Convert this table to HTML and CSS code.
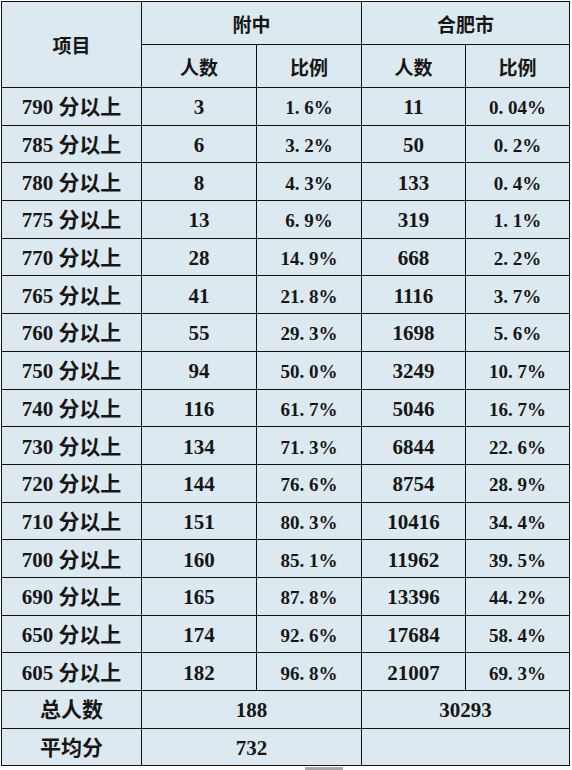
FILE: index.html
```html
<!DOCTYPE html>
<html lang="zh">
<head>
<meta charset="utf-8">
<link rel="stylesheet" href="styles.css">
</head>
<body>
<table class="score-table">
  <colgroup>
    <col class="c1"><col class="c2"><col class="c3"><col class="c4"><col class="c5">
  </colgroup>
  <thead>
    <tr class="hrow">
      <th rowspan="2">项目</th>
      <th colspan="2">附中</th>
      <th colspan="2">合肥市</th>
    </tr>
    <tr class="hrow">
      <th>人数</th><th>比例</th><th>人数</th><th>比例</th>
    </tr>
  </thead>
  <tbody>
    <tr><td class="lbl">790 分以上</td><td>3</td><td class="pct">1. 6%</td><td>11</td><td class="pct">0. 04%</td></tr>
    <tr><td class="lbl">785 分以上</td><td>6</td><td class="pct">3. 2%</td><td>50</td><td class="pct">0. 2%</td></tr>
    <tr><td class="lbl">780 分以上</td><td>8</td><td class="pct">4. 3%</td><td>133</td><td class="pct">0. 4%</td></tr>
    <tr><td class="lbl">775 分以上</td><td>13</td><td class="pct">6. 9%</td><td>319</td><td class="pct">1. 1%</td></tr>
    <tr><td class="lbl">770 分以上</td><td>28</td><td class="pct">14. 9%</td><td>668</td><td class="pct">2. 2%</td></tr>
    <tr><td class="lbl">765 分以上</td><td>41</td><td class="pct">21. 8%</td><td>1116</td><td class="pct">3. 7%</td></tr>
    <tr><td class="lbl">760 分以上</td><td>55</td><td class="pct">29. 3%</td><td>1698</td><td class="pct">5. 6%</td></tr>
    <tr><td class="lbl">750 分以上</td><td>94</td><td class="pct">50. 0%</td><td>3249</td><td class="pct">10. 7%</td></tr>
    <tr><td class="lbl">740 分以上</td><td>116</td><td class="pct">61. 7%</td><td>5046</td><td class="pct">16. 7%</td></tr>
    <tr><td class="lbl">730 分以上</td><td>134</td><td class="pct">71. 3%</td><td>6844</td><td class="pct">22. 6%</td></tr>
    <tr><td class="lbl">720 分以上</td><td>144</td><td class="pct">76. 6%</td><td>8754</td><td class="pct">28. 9%</td></tr>
    <tr><td class="lbl">710 分以上</td><td>151</td><td class="pct">80. 3%</td><td>10416</td><td class="pct">34. 4%</td></tr>
    <tr><td class="lbl">700 分以上</td><td>160</td><td class="pct">85. 1%</td><td>11962</td><td class="pct">39. 5%</td></tr>
    <tr><td class="lbl">690 分以上</td><td>165</td><td class="pct">87. 8%</td><td>13396</td><td class="pct">44. 2%</td></tr>
    <tr><td class="lbl">650 分以上</td><td>174</td><td class="pct">92. 6%</td><td>17684</td><td class="pct">58. 4%</td></tr>
    <tr><td class="lbl">605 分以上</td><td>182</td><td class="pct">96. 8%</td><td>21007</td><td class="pct">69. 3%</td></tr>
    <tr><td class="lbl">总人数</td><td colspan="2">188</td><td colspan="2">30293</td></tr>
    <tr><td class="lbl">平均分</td><td colspan="2">732</td><td colspan="2"></td></tr>
  </tbody>
</table>
<div class="scroll-hint"></div>
</body>
</html>
```
FILE: styles.css
```css
html, body {
  margin: 0;
  padding: 0;
  background: #ffffff;
}
body {
  padding: 1px 0 0 1px;
  width: 572px;
  height: 770px;
  box-sizing: border-box;
  overflow: hidden;
}
.score-table {
  border-collapse: collapse;
  table-layout: fixed;
  width: 569px;
  background: #dde9f0;
  color: #161616;
  font-family: "Liberation Serif", "Noto Sans CJK SC", serif;
  font-weight: bold;
  font-size: 21px;
}
.c1 { width: 140px; }
.c2 { width: 115px; }
.c3 { width: 105px; }
.c4 { width: 104px; }
.c5 { width: 104px; }
.score-table th,
.score-table td {
  border: 1px solid #121212;
  text-align: center;
  vertical-align: middle;
  padding: 0;
  line-height: 1;
}
.hrow th {
  height: 42px;
  font-family: "Noto Sans CJK SC", sans-serif;
  font-weight: bold;
  font-size: 19px;
}
tbody td {
  height: 36.7px;
}
.score-table tbody td {
  padding-top: 3px;
  height: 33.7px;
}
.lbl {
  font-size: 21px;
}
.pct {
  font-size: 19px;
}
.scroll-hint {
  width: 38px;
  height: 3px;
  margin: 1px 0 0 304px;
  background: #a7a7a7;
}
```
